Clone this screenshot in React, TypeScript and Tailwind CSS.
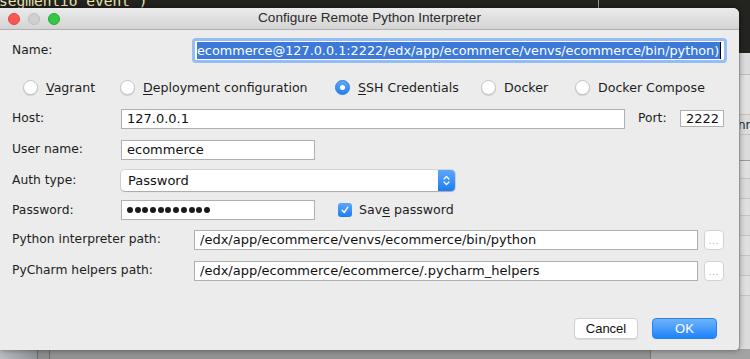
import React from "react";

const UI = { fontFamily: '"DejaVu Sans", sans-serif' };
const SYS = { fontFamily: '"Liberation Sans", Arial, sans-serif' };

function Radio({ checked }: { checked?: boolean }) {
  if (checked) {
    return (
      <span className="w-[15px] h-[15px] rounded-full bg-gradient-to-b from-[#5ea8fb] to-[#1f7ff5] border border-[#2a78e0] flex items-center justify-center shrink-0">
        <span className="w-[5px] h-[5px] rounded-full bg-white" />
      </span>
    );
  }
  return (
    <span className="w-[15px] h-[15px] rounded-full bg-white border border-[#c4c4c4] shadow-[0_1px_1px_rgba(0,0,0,0.12)] shrink-0" />
  );
}

function RadioOpt({
  w,
  checked,
  children,
}: {
  w: string;
  checked?: boolean;
  children: React.ReactNode;
}) {
  return (
    <div className={`flex items-center gap-[8px] ${w}`}>
      <Radio checked={checked} />
      <span className="text-[12.6px] text-[#1e1e1e] whitespace-nowrap">{children}</span>
    </div>
  );
}

function Field({ w, children }: { w: string; children?: React.ReactNode }) {
  return (
    <div
      className={`${w} h-[20px] bg-white border border-[#b0b0b0] flex items-center pl-[5px] text-[13px] text-[#111] whitespace-nowrap overflow-hidden`}
    >
      {children}
    </div>
  );
}

function DotsBtn() {
  return (
    <div className="ml-[6px] w-[20px] h-[20px] rounded-[4px] bg-white border border-[#d2d2d2] flex items-end justify-center pb-[3px]">
      <span className="text-[8px] leading-[8px] text-[#a0a0a0] tracking-[1px]">...</span>
    </div>
  );
}

const LBL = "text-[12.3px] text-[#1e1e1e] whitespace-nowrap";

export default function App() {
  return (
    <div className="relative w-[750px] h-[359px] overflow-hidden bg-[#939393]" style={UI}>
      {/* editor in background */}
      <div className="absolute left-0 top-0 w-[750px] h-[56px] bg-[#23231f]">
        <span
          className="absolute left-[-1px] top-[-9px] text-[14.5px] text-[#efe9b8] whitespace-nowrap"
          style={{ fontFamily: '"DejaVu Sans Mono", monospace' }}
        >
          segmentio_event')
        </span>
        <div className="absolute left-[598px] top-0 w-[1px] h-[10px] bg-[#9a9a9a]" />
      </div>
      {/* right background panel */}
      <div className="absolute left-[739px] top-[53px] w-[11px] h-[306px] bg-[#dcdcdc] border-l border-[#b8b8b8] overflow-hidden">
        <div className="h-[22px] border-b border-[#bdbdbd]" />
        <div className="h-[40px] border-b border-[#c4c4c4] bg-[#e2e2e2]" />
        <div className="h-[20px] border-b border-[#c4c4c4] flex items-center">
          <span className="text-[12px] leading-[12px] text-[#222] ml-[-2px]">nn</span>
        </div>
        <div className="h-[26px] border-b border-[#9a9a9a]" />
        <div className="h-[18px] border-b border-[#c4c4c4] bg-[#e0e0e0]" />
        <div className="h-[20px] border-b border-[#c4c4c4]" />
        <div className="h-[17px] border-b border-[#c4c4c4] bg-[#e0e0e0]" />
        <div className="h-[20px] border-b border-[#c4c4c4]" />
        <div className="h-[20px] border-b border-[#c4c4c4] bg-[#e0e0e0]" />
        <div className="h-[20px] border-b border-[#c4c4c4]" />
        <div className="h-[20px] border-b border-[#c4c4c4] bg-[#e0e0e0]" />
      </div>
      {/* bottom background */}
      <div className="absolute left-0 top-[349px] w-[750px] h-[10px] flex">
        <div className="w-[37px] h-full bg-gradient-to-r from-[#b9bcc0] to-[#8f9397]" />
        <div className="w-[1px] h-full bg-[#6a6a6a]" />
        <div className="w-[11px] h-full bg-[#8d8d8d]" />
        <div className="w-[1px] h-full bg-[#6a6a6a]" />
        <div className="w-[600px] h-full bg-[#929292]" />
        <div className="w-[1px] h-full bg-[#777]" />
        <div className="flex-1 h-full bg-[#a3a3a3]" />
      </div>

      {/* dialog window */}
      <div className="absolute left-0 top-[8px] w-[739px] h-[342px] bg-[#ececec] rounded-tr-[6px] rounded-br-[4px] shadow-[0_0_6px_rgba(0,0,0,0.45)] flex flex-col overflow-hidden">
        {/* title bar */}
        <div className="relative h-[22px] shrink-0 bg-gradient-to-b from-[#ebebeb] to-[#d4d4d4] border-b border-[#b1b1b1] flex items-center">
          <div className="flex items-center gap-[8px] pl-[8px]">
            <span className="w-[12px] h-[12px] rounded-full bg-[#fc5753] border border-[#df4744]" />
            <span className="w-[12px] h-[12px] rounded-full bg-[#d0d0d0] border border-[#bdbdbd]" />
            <span className="w-[12px] h-[12px] rounded-full bg-[#34c748] border border-[#27aa35]" />
          </div>
          <div className="absolute inset-0 flex items-center justify-center text-[13.6px] text-[#2b2b2b]" style={SYS}>
            Configure Remote Python Interpreter
          </div>
        </div>

        <div className="flex-1 flex flex-col pl-[12px]">
          {/* Name */}
          <div className="h-[28px] mt-[6px] flex items-center">
            <div className={`w-[180px] ${LBL}`}>Name:</div>
            <div className="w-[535px] h-[25px] rounded-[4px] border-[3px] border-[#94bdf1] bg-white p-[1px] flex">
              <div className="flex-1 flex items-center overflow-hidden pl-[1px]">
                <span className="h-[17px] bg-[#3c79d8] text-white text-[12.8px] leading-[17px] whitespace-nowrap pr-[1px]">
                  ecommerce@127.0.0.1:2222/edx/app/ecommerce/venvs/ecommerce/bin/python)
                </span>
                <span className="w-[1px] h-[17px] bg-black" />
              </div>
            </div>
          </div>

          {/* Radios */}
          <div className="h-[30px] mt-[9px] flex items-center">
            <div className="w-[11px]" />
            <RadioOpt w="w-[97px]">
              <span className="underline underline-offset-2">V</span>agrant
            </RadioOpt>
            <RadioOpt w="w-[215px]">
              <span className="underline underline-offset-2">D</span>eployment configuration
            </RadioOpt>
            <RadioOpt w="w-[146px]" checked>
              <span className="underline underline-offset-2">S</span>SH Credentials
            </RadioOpt>
            <RadioOpt w="w-[94px]">Docker</RadioOpt>
            <RadioOpt w="w-[140px]">Docker Compose</RadioOpt>
          </div>

          {/* Host */}
          <div className="h-[31px] flex items-center">
            <div className={`w-[109px] ${LBL}`}>Host:</div>
            <Field w="w-[504px]">127.0.0.1</Field>
            <div className={`w-[55px] pl-[13px] ${LBL}`}>Port:</div>
            <div className="w-[44px] h-[17px] bg-white border border-[#b0b0b0] flex items-center pl-[5px] text-[13px] text-[#111]">
              2222
            </div>
          </div>

          {/* User name */}
          <div className="h-[31px] flex items-center">
            <div className={`w-[109px] ${LBL}`}>User name:</div>
            <Field w="w-[194px]">ecommerce</Field>
          </div>

          {/* Auth type */}
          <div className="h-[31px] flex items-center">
            <div className={`w-[109px] ${LBL}`}>Auth type:</div>
            <div className="w-[334px] h-[21px] rounded-[4px] bg-white shadow-[0_0_0_1px_rgba(0,0,0,0.1),0_1px_1px_rgba(0,0,0,0.2)] flex overflow-hidden">
              <div className="flex-1 flex items-center pl-[7px] text-[13px] text-[#111]">Password</div>
              <div className="w-[17px] h-full bg-gradient-to-b from-[#5aa6fb] to-[#1b7cf4] flex items-center justify-center">
                <svg width="9" height="13" viewBox="0 0 9 13" fill="none">
                  <path d="M2 5 L4.5 2.5 L7 5" stroke="white" strokeWidth="1.2" strokeLinecap="round" strokeLinejoin="round" />
                  <path d="M2 8 L4.5 10.5 L7 8" stroke="white" strokeWidth="1.2" strokeLinecap="round" strokeLinejoin="round" />
                </svg>
              </div>
            </div>
          </div>

          {/* Password */}
          <div className="h-[28px] flex items-center">
            <div className={`w-[109px] ${LBL}`}>Password:</div>
            <div className="w-[194px] h-[20px] bg-white border border-[#b0b0b0] flex items-center pl-[5px] gap-[1.7px]">
              {Array.from({ length: 11 }).map((_, i) => (
                <span key={i} className="w-[6px] h-[6px] rounded-full bg-[#1a1a1a]" />
              ))}
            </div>
            <div className="ml-[23px] w-[14px] h-[14px] rounded-[3px] bg-gradient-to-b from-[#5aa6fb] to-[#1b7cf4] flex items-center justify-center">
              <svg width="10" height="10" viewBox="0 0 10 10" fill="none">
                <path d="M2.2 5.3 L4.2 7.5 L7.8 2.2" stroke="white" strokeWidth="1.4" strokeLinecap="round" strokeLinejoin="round" />
              </svg>
            </div>
            <div className={`ml-[7px] text-[12.6px] text-[#1e1e1e]`}>
              Sav<span className="underline underline-offset-2">e</span> password
            </div>
          </div>

          {/* Python interpreter path */}
          <div className="h-[31px] flex items-center">
            <div className={`w-[182px] ${LBL}`}>Python interpreter path:</div>
            <Field w="w-[504px]">/edx/app/ecommerce/venvs/ecommerce/bin/python</Field>
            <DotsBtn />
          </div>

          {/* PyCharm helpers path */}
          <div className="h-[31px] flex items-center">
            <div className={`w-[182px] ${LBL}`}>PyCharm helpers path:</div>
            <Field w="w-[504px]">/edx/app/ecommerce/ecommerce/.pycharm_helpers</Field>
            <DotsBtn />
          </div>

          <div className="flex-1" />

          {/* Buttons */}
          <div className="h-[21px] mb-[11px] flex items-center justify-end pr-[22px] gap-[14px]" style={SYS}>
            <div className="w-[64px] h-[21px] rounded-[4px] bg-white border border-[#d0d0d0] shadow-[0_1px_0_rgba(0,0,0,0.08)] flex items-center justify-center text-[13px] text-[#111]">
              Cancel
            </div>
            <div className="w-[65px] h-[21px] rounded-[4px] bg-gradient-to-b from-[#6cb3fa] to-[#1a82fb] border border-[#2a7ff0] flex items-center justify-center text-[13px] text-white">
              OK
            </div>
          </div>
        </div>
      </div>
    </div>
  );
}
